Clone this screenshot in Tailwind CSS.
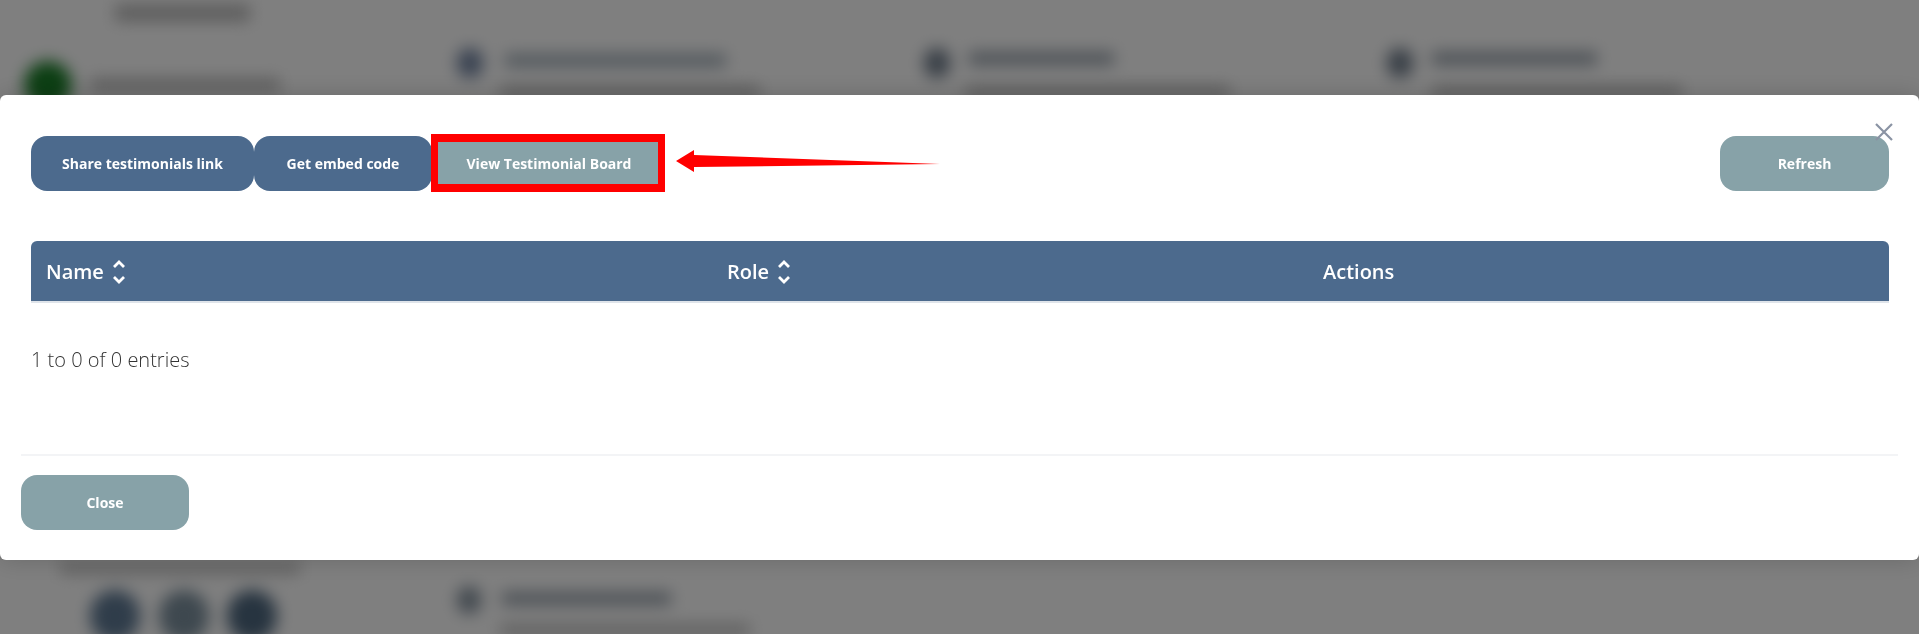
<!DOCTYPE html>
<html lang="en">
<head>
    <meta charset="UTF-8">
    <title>Testimonials</title>
    <script src="https://cdn.jsdelivr.net/npm/@tailwindcss/browser@4"></script>
</head>
<body class="bg-white overflow-hidden font-['Open_Sans',sans-serif]">
    <div class="relative h-[634px] w-full overflow-hidden">
        <!-- Blurred page behind the modal -->
        <div class="absolute inset-0 blur-[8px]">
            <div class="absolute left-[115px] top-[5px] w-[135px] h-[16px] bg-[#b8b8b8]"></div>
            <div class="absolute left-[24px] top-[61px] w-[48px] h-[48px] rounded-full bg-[#1a7f28]"></div>
            <div class="absolute left-[90px] top-[78px] w-[190px] h-[14px] bg-[#c0c0c0]"></div>
            <div class="absolute left-[457px] top-[48px] w-[26px] h-[30px] rounded-full bg-[#7587a5]"></div>
            <div class="absolute left-[505px] top-[54px] w-[221px] h-[13px] bg-[#a4b0ba]"></div>
            <div class="absolute left-[500px] top-[86px] w-[260px] h-[12px] bg-[#bcbcbc]"></div>
            <div class="absolute left-[924px] top-[48px] w-[26px] h-[30px] rounded-full bg-[#727f8e]"></div>
            <div class="absolute left-[969px] top-[52px] w-[145px] h-[13px] bg-[#98a2ac]"></div>
            <div class="absolute left-[965px] top-[86px] w-[265px] h-[12px] bg-[#bcbcbc]"></div>
            <div class="absolute left-[1387px] top-[48px] w-[26px] h-[30px] rounded-full bg-[#727f8e]"></div>
            <div class="absolute left-[1432px] top-[52px] w-[165px] h-[13px] bg-[#98a2ac]"></div>
            <div class="absolute left-[1432px] top-[86px] w-[250px] h-[12px] bg-[#bcbcbc]"></div>
            <div class="absolute left-[60px] top-[562px] w-[240px] h-[12px] bg-[#c4c4c4]"></div>
            <div class="absolute left-[90px] top-[590px] w-[50px] h-[52px] rounded-full bg-[#5f7a95]"></div>
            <div class="absolute left-[159px] top-[590px] w-[50px] h-[52px] rounded-full bg-[#7d919f]"></div>
            <div class="absolute left-[227px] top-[590px] w-[50px] h-[52px] rounded-full bg-[#4e6880]"></div>
            <div class="absolute left-[457px] top-[586px] w-[24px] h-[28px] rounded-full bg-[#8794a0]"></div>
            <div class="absolute left-[502px] top-[592px] w-[169px] h-[13px] bg-[#98a2ac]"></div>
            <div class="absolute left-[500px] top-[624px] w-[250px] h-[12px] bg-[#c0c0c0]"></div>
        </div>
        <div class="absolute inset-0 bg-black/50"></div>

        <!-- Modal -->
        <div class="absolute left-0 right-0 top-[95px] h-[465px] bg-white rounded-md shadow-[0_0_24px_rgba(0,0,0,0.18)]">
            <button class="absolute right-[26px] top-[28px]">
                <svg width="18" height="18" viewBox="0 0 18 18" fill="none" stroke="#8a93a3" stroke-width="2.2"><path d="M1 1 L17 17 M17 1 L1 17"/></svg>
            </button>

            <div class="pl-[31px] pr-[30px] pt-[41px]">
                <div class="flex items-start justify-between">
                    <div class="flex">
                        <button class="w-[223px] h-[55px] rounded-2xl bg-[#4c6a8d] text-white text-sm font-bold">Share testimonials link</button>
                        <button class="w-[178px] h-[55px] rounded-2xl bg-[#4c6a8d] text-white text-sm font-bold">Get embed code</button>
                        <button class="w-[230px] h-[55px] ml-[2px] rounded-2xl bg-[#87a2a8] text-white text-sm font-bold">View Testimonial Board</button>
                    </div>
                    <button class="w-[169px] h-[55px] rounded-2xl bg-[#87a2a8] text-white text-sm font-bold">Refresh</button>
                </div>

                <div class="mt-[50px] h-[62px] rounded-t-md border-b-2 border-[#dfe4ea]">
                    <div class="grid grid-cols-[681px_596px_1fr] items-center h-[60px] pt-[1px] rounded-t-md bg-[#4c6a8d] text-white text-[20px] font-semibold">
                        <div class="pl-[15px] flex items-center gap-[8px]">Name
                            <svg width="14" height="24" viewBox="0 0 14 24" fill="none" stroke="white" stroke-width="2.8"><path d="M2 7 L7 2 L12 7 M2 17 L7 22 L12 17"/></svg>
                        </div>
                        <div class="pl-[15px] flex items-center gap-[8px]">Role
                            <svg width="14" height="24" viewBox="0 0 14 24" fill="none" stroke="white" stroke-width="2.8"><path d="M2 7 L7 2 L12 7 M2 17 L7 22 L12 17"/></svg>
                        </div>
                        <div class="pl-[15px]">Actions</div>
                    </div>
                </div>

                <p class="mt-[43px] text-[20px] leading-[28px] font-light text-[#333333]">1 to 0 of 0 entries</p>
            </div>

            <div class="mx-[21px] mt-[80px] border-t-2 border-gray-100 pt-[19px]">
                <button class="w-[168px] h-[55px] rounded-2xl bg-[#87a2a8] text-white text-sm font-bold">Close</button>
            </div>
        </div>

        <!-- Annotation drawn over the screenshot -->
        <div class="absolute left-[431px] top-[134px] w-[234px] h-[58px] border-x-[7px] border-y-[8px] border-[#ff0000]"></div>
        <svg class="absolute left-[670px] top-[145px]" width="280" height="32" viewBox="0 0 280 32">
            <path d="M6 16 L24 5 L24 10 L270 19 L24 22 L24 27 Z" fill="#ff0000"/>
        </svg>
    </div>
</body>
</html>
